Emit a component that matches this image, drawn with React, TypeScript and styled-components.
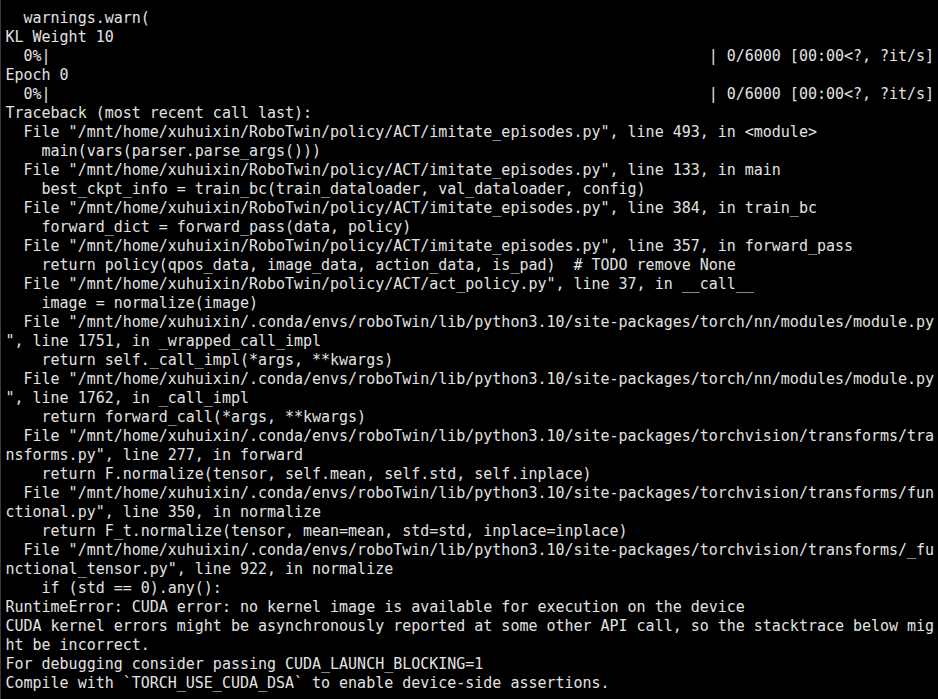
import React from "react";
import styled, { createGlobalStyle } from "styled-components";

const Global = createGlobalStyle`
  html, body { margin: 0; padding: 0; background: #000; }
  #root { width: 938px; height: 699px; }
`;

const Terminal = styled.div`
  box-sizing: border-box;
  width: 938px;
  height: 699px;
  background: #000;
  border-left: 1px solid #3a3a3a;
  padding: 8.5px 0 0 4.5px;
  overflow: hidden;
  display: flex;
  flex-direction: column;
`;

const Line = styled.div`
  font-family: "DejaVu Sans Mono", "Liberation Mono", monospace;
  font-size: 15px;
  line-height: 19.03px;
  height: 19.03px;
  flex: none;
  color: #e2e2e2;
  white-space: pre;
  letter-spacing: -0.015px;
`;

const bar = "|" + " ".repeat(73) + "| 0/6000 [00:00<?, ?it/s]";

const lines: string[] = [
  "  warnings.warn(",
  "KL Weight 10",
  "  0%" + bar,
  "Epoch 0",
  "  0%" + bar,
  "Traceback (most recent call last):",
  '  File "/mnt/home/xuhuixin/RoboTwin/policy/ACT/imitate_episodes.py", line 493, in <module>',
  "    main(vars(parser.parse_args()))",
  '  File "/mnt/home/xuhuixin/RoboTwin/policy/ACT/imitate_episodes.py", line 133, in main',
  "    best_ckpt_info = train_bc(train_dataloader, val_dataloader, config)",
  '  File "/mnt/home/xuhuixin/RoboTwin/policy/ACT/imitate_episodes.py", line 384, in train_bc',
  "    forward_dict = forward_pass(data, policy)",
  '  File "/mnt/home/xuhuixin/RoboTwin/policy/ACT/imitate_episodes.py", line 357, in forward_pass',
  "    return policy(qpos_data, image_data, action_data, is_pad)  # TODO remove None",
  '  File "/mnt/home/xuhuixin/RoboTwin/policy/ACT/act_policy.py", line 37, in __call__',
  "    image = normalize(image)",
  '  File "/mnt/home/xuhuixin/.conda/envs/roboTwin/lib/python3.10/site-packages/torch/nn/modules/module.py',
  '", line 1751, in _wrapped_call_impl',
  "    return self._call_impl(*args, **kwargs)",
  '  File "/mnt/home/xuhuixin/.conda/envs/roboTwin/lib/python3.10/site-packages/torch/nn/modules/module.py',
  '", line 1762, in _call_impl',
  "    return forward_call(*args, **kwargs)",
  '  File "/mnt/home/xuhuixin/.conda/envs/roboTwin/lib/python3.10/site-packages/torchvision/transforms/tra',
  'nsforms.py", line 277, in forward',
  "    return F.normalize(tensor, self.mean, self.std, self.inplace)",
  '  File "/mnt/home/xuhuixin/.conda/envs/roboTwin/lib/python3.10/site-packages/torchvision/transforms/fun',
  'ctional.py", line 350, in normalize',
  "    return F_t.normalize(tensor, mean=mean, std=std, inplace=inplace)",
  '  File "/mnt/home/xuhuixin/.conda/envs/roboTwin/lib/python3.10/site-packages/torchvision/transforms/_fu',
  'nctional_tensor.py", line 922, in normalize',
  "    if (std == 0).any():",
  "RuntimeError: CUDA error: no kernel image is available for execution on the device",
  "CUDA kernel errors might be asynchronously reported at some other API call, so the stacktrace below mig",
  "ht be incorrect.",
  "For debugging consider passing CUDA_LAUNCH_BLOCKING=1",
  "Compile with `TORCH_USE_CUDA_DSA` to enable device-side assertions.",
];

export default function App() {
  return (
    <>
      <Global />
      <Terminal>
        {lines.map((l, i) => (
          <Line key={i}>{l}</Line>
        ))}
      </Terminal>
    </>
  );
}
